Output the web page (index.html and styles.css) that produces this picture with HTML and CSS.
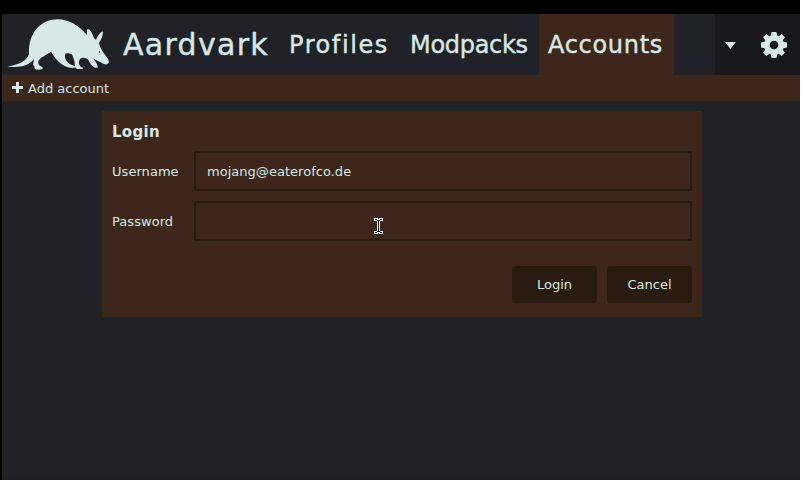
FILE: index.html
```html
<!DOCTYPE html>
<html lang="en">
<head>
<meta charset="utf-8">
<title>Aardvark - Accounts</title>
<link rel="stylesheet" href="styles.css">
</head>
<body>
<div class="screen">
  <header class="topbar">
    <a class="brand">
      <svg class="logo" width="104" height="52" viewBox="7 18 104 52" fill="currentColor">
        <path d="M7 66.500C16 65 25 63 29 54.500C28 39 35 24 51 20C64 16.500 78 24 86 34L87 35L87 30.500C88 26 92 32 94 38L96 40C97.500 36 101 31 103 31.500C103 36 101 40 99 43C100 49 104 53 107.500 58C111 63 107 66.500 102 63L93 58.500C95.500 61 98.500 66 97.500 67.500C95 69 90 65 88.500 60C86 57.500 82 57 80 59C78 63 79 65 81 67C85 68 83 69.500 77 69C73.500 67 76 63 73 57C72.500 53 68 53 65.500 53.500C63.500 58 67 63 72 65C76 66 76 68 72 68C63 67 57 62 51 51.500C46 55.500 41 57 39 60C37 63 39 66 42 67C44 69 42 70 36 69.500C33 68.500 36 66 33 65L34 59C29 66 19 68 7 66.500Z"/>
        <circle cx="99.500" cy="52" r=".7" fill="#212227"/>
      </svg>
      <span class="brand-name">Aardvark</span>
    </a>
    <nav class="tabs">
      <a class="tab profiles">Profiles</a>
      <a class="tab modpacks">Modpacks</a>
      <a class="tab accounts active">Accounts</a>
    </nav>
    <div class="tools">
      <svg width="11" height="7" viewBox="0 0 11 7" fill="currentColor"><path d="M0 0H11L5.500 7Z"/></svg>
      <svg width="26" height="26" viewBox="-13 -13 26 26" fill="currentColor">
        <path fill-rule="evenodd" d="M-3.200-9.500L-2.400-13H2.400L3.200-9.500L4.700-8.800L7.700-10.900L10.900-7.700L8.800-4.700L9.500-3.200L13-2.400V2.400L9.500 3.200L8.800 4.700L10.900 7.700L7.700 10.900L4.700 8.800L3.200 9.500L2.400 13H-2.400L-3.200 9.500L-4.700 8.800L-7.700 10.900L-10.900 7.700L-8.800 4.700L-9.500 3.200L-13 2.400V-2.400L-9.500-3.200L-8.800-4.700L-10.900-7.700L-7.700-10.900L-4.700-8.800ZM4.300 0A4.300 4.300 0 1 0-4.300 0A4.300 4.300 0 1 0 4.300 0Z"/>
      </svg>
    </div>
  </header>
  <div class="actions">
    <svg width="11" height="11" viewBox="0 0 11 11" fill="currentColor"><path d="M4 0H7V4H11V7H7V11H4V7H0V4H4Z"/></svg>
    <span>Add account</span>
  </div>
  <main class="content">
    <form class="login">
      <h1>Login</h1>
      <div class="field"><label for="user">Username</label><input id="user" type="text" value="mojang@eaterofco.de"></div>
      <div class="field"><label for="pass">Password</label><input id="pass" type="password"></div>
      <div class="buttons"><button type="button">Login</button><button type="button">Cancel</button></div>
    </form>
  </main>
  <svg class="pointer" width="9" height="16" viewBox="0 0 9 16" shape-rendering="crispEdges">
    <path fill="#fff" d="M0 0H4V1H5V0H9V3H6V13H9V16H5V15H4V16H0V13H3V3H0Z"/>
    <path fill="#000" d="M1 1H3V2H6V1H8V2H6V3H5V13H6V14H8V15H6V14H3V15H1V14H3V13H4V3H3V2H1Z"/>
  </svg>
</div>
</body>
</html>
```

FILE: styles.css
```css
* { box-sizing: border-box; }

body {
  margin: 0;
  background: #fff;
  color: #d8e8e6;
  font: 13px/16px "DejaVu Sans", sans-serif;
}

.screen {
  position: relative;
  display: flex;
  flex-direction: column;
  width: 800px;
  height: 480px;
  border-top: 14px solid #000;
  border-left: 2px solid #000;
  background: #212227;
  box-shadow: inset 0 -3px #231e25;
}

.topbar { display: flex; height: 61px; }

.brand {
  display: flex;
  width: 279px;
  padding: 4px 0 0 5px;
}

.logo { flex: none; }

.brand-name {
  margin: 9px 0 0 12px;
  font-size: 30px;
  line-height: 36px;
  letter-spacing: 1.3px;
  -webkit-text-stroke: .4px;
}

.tabs { display: flex; flex: 1; }

.tab {
  padding: 0 0 0 8px;
  font-size: 24px;
  line-height: 62px;
  -webkit-text-stroke: .4px;
}

.profiles { width: 121px; letter-spacing: 1.6px; }
.modpacks { width: 137px; letter-spacing: -.3px; }
.accounts { width: 135px; padding-left: 9px; letter-spacing: .7px; }
.active { background: #3c271a; }

.tools {
  display: flex;
  align-items: center;
  gap: 25px;
  width: 85px;
  padding: 1px 0 0 10px;
  background: #17181c;
}

.actions {
  display: flex;
  align-items: center;
  gap: 5px;
  height: 26px;
  padding: 0 10px;
  background: #3c271a;
}

.actions svg { margin-bottom: 1px; }

.actions span { padding-top: 2px; }

.content { padding: 10px 98px 0 100px; }

.login {
  height: 206px;
  padding: 11px 10px 10px;
  background: #3c271a;
}

.login h1 {
  margin: 0 0 9px;
  font-size: 15px;
  line-height: 20px;
  letter-spacing: .3px;
}

.field {
  display: flex;
  align-items: center;
  margin-bottom: 10px;
}

.field label { width: 82px; padding-top: 2px; letter-spacing: .05px; }

.field input {
  flex: 1;
  height: 40px;
  padding: 0 11px;
  border: 2px solid #2a1b10;
  outline: 0;
  background: transparent;
  color: inherit;
  font: inherit;
  letter-spacing: .03px;
}

.buttons {
  display: flex;
  justify-content: flex-end;
  gap: 10px;
  padding-top: 15px;
}

.buttons button {
  width: 85px;
  height: 37px;
  padding: 0;
  border: 0;
  border-radius: 3px;
  background: #2a1b10;
  color: inherit;
  font: inherit;
}

.pointer { position: absolute; left: 372px; top: 204px; }
```
